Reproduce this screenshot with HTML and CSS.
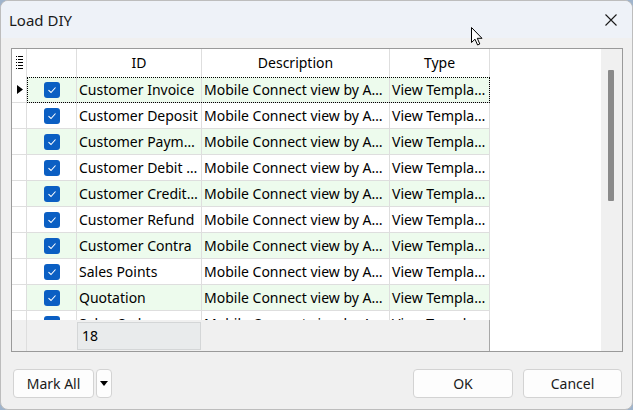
FILE: index.html
```html
<!DOCTYPE html>
<html>
<head>
<meta charset="utf-8">
<link rel="stylesheet" href="styles.css">
</head>
<body>
<div class="window">
  <div class="titlebar">
    <span class="title">Load DIY</span>
    <svg class="close" width="12" height="12" viewBox="0 0 12 12"><path d="M0.5 0.5 L11.5 11.5 M11.5 0.5 L0.5 11.5" stroke="#1a1a1a" stroke-width="1.1" fill="none"/></svg>
  </div>
  <div class="content">
    <div class="grid">
      <div class="grid-main">
        <div class="table">
          <div class="row header">
            <div class="cell ind">
              <svg width="7" height="14" viewBox="0 0 7 14">
                <rect x="0" y="0" width="1" height="1" fill="#000"/><rect x="2" y="0" width="5" height="1" fill="#000"/>
                <rect x="0" y="3" width="1" height="1" fill="#000"/><rect x="2" y="3" width="5" height="1" fill="#000"/>
                <rect x="0" y="6" width="1" height="1" fill="#000"/><rect x="2" y="6" width="5" height="1" fill="#000"/>
                <rect x="0" y="9" width="1" height="1" fill="#000"/><rect x="2" y="9" width="5" height="1" fill="#000"/>
                <rect x="0" y="12" width="1" height="1" fill="#000"/><rect x="2" y="12" width="5" height="1" fill="#000"/>
              </svg>
            </div>
            <div class="cell chk"></div>
            <div class="cell id center">ID</div>
            <div class="cell desc center">Description</div>
            <div class="cell type center">Type</div>
          </div>
          <div class="body">
            <div class="row alt">
              <div class="cell ind"><svg width="6" height="9" viewBox="0 0 6 9"><path d="M0 0 L6 4.5 L0 9 Z" fill="#000"/></svg></div>
              <div class="focus">
                <div class="cell chk"><span class="box"><svg width="10" height="8" viewBox="0 0 10 8"><path d="M1.5 4.2 L4 6.5 L8.5 1.5" stroke="#fff" stroke-width="1.1" fill="none"/></svg></span></div>
                <div class="cell id">Customer Invoice</div>
                <div class="cell desc">Mobile Connect view by Accounts</div>
                <div class="cell type">View Template</div>
              </div>
            </div>
            <div class="row">
              <div class="cell ind"></div>
              <div class="cell chk"><span class="box"><svg width="10" height="8" viewBox="0 0 10 8"><path d="M1.5 4.2 L4 6.5 L8.5 1.5" stroke="#fff" stroke-width="1.1" fill="none"/></svg></span></div>
              <div class="cell id">Customer Deposit</div>
              <div class="cell desc">Mobile Connect view by Accounts</div>
              <div class="cell type">View Template</div>
            </div>
            <div class="row alt">
              <div class="cell ind"></div>
              <div class="cell chk"><span class="box"><svg width="10" height="8" viewBox="0 0 10 8"><path d="M1.5 4.2 L4 6.5 L8.5 1.5" stroke="#fff" stroke-width="1.1" fill="none"/></svg></span></div>
              <div class="cell id">Customer Payment</div>
              <div class="cell desc">Mobile Connect view by Accounts</div>
              <div class="cell type">View Template</div>
            </div>
            <div class="row">
              <div class="cell ind"></div>
              <div class="cell chk"><span class="box"><svg width="10" height="8" viewBox="0 0 10 8"><path d="M1.5 4.2 L4 6.5 L8.5 1.5" stroke="#fff" stroke-width="1.1" fill="none"/></svg></span></div>
              <div class="cell id">Customer Debit Note</div>
              <div class="cell desc">Mobile Connect view by Accounts</div>
              <div class="cell type">View Template</div>
            </div>
            <div class="row alt">
              <div class="cell ind"></div>
              <div class="cell chk"><span class="box"><svg width="10" height="8" viewBox="0 0 10 8"><path d="M1.5 4.2 L4 6.5 L8.5 1.5" stroke="#fff" stroke-width="1.1" fill="none"/></svg></span></div>
              <div class="cell id">Customer Credit Note</div>
              <div class="cell desc">Mobile Connect view by Accounts</div>
              <div class="cell type">View Template</div>
            </div>
            <div class="row">
              <div class="cell ind"></div>
              <div class="cell chk"><span class="box"><svg width="10" height="8" viewBox="0 0 10 8"><path d="M1.5 4.2 L4 6.5 L8.5 1.5" stroke="#fff" stroke-width="1.1" fill="none"/></svg></span></div>
              <div class="cell id">Customer Refund</div>
              <div class="cell desc">Mobile Connect view by Accounts</div>
              <div class="cell type">View Template</div>
            </div>
            <div class="row alt">
              <div class="cell ind"></div>
              <div class="cell chk"><span class="box"><svg width="10" height="8" viewBox="0 0 10 8"><path d="M1.5 4.2 L4 6.5 L8.5 1.5" stroke="#fff" stroke-width="1.1" fill="none"/></svg></span></div>
              <div class="cell id">Customer Contra</div>
              <div class="cell desc">Mobile Connect view by Accounts</div>
              <div class="cell type">View Template</div>
            </div>
            <div class="row">
              <div class="cell ind"></div>
              <div class="cell chk"><span class="box"><svg width="10" height="8" viewBox="0 0 10 8"><path d="M1.5 4.2 L4 6.5 L8.5 1.5" stroke="#fff" stroke-width="1.1" fill="none"/></svg></span></div>
              <div class="cell id">Sales Points</div>
              <div class="cell desc">Mobile Connect view by Accounts</div>
              <div class="cell type">View Template</div>
            </div>
            <div class="row alt">
              <div class="cell ind"></div>
              <div class="cell chk"><span class="box"><svg width="10" height="8" viewBox="0 0 10 8"><path d="M1.5 4.2 L4 6.5 L8.5 1.5" stroke="#fff" stroke-width="1.1" fill="none"/></svg></span></div>
              <div class="cell id">Quotation</div>
              <div class="cell desc">Mobile Connect view by Accounts</div>
              <div class="cell type">View Template</div>
            </div>
            <div class="row">
              <div class="cell ind"></div>
              <div class="cell chk"><span class="box"><svg width="10" height="8" viewBox="0 0 10 8"><path d="M1.5 4.2 L4 6.5 L8.5 1.5" stroke="#fff" stroke-width="1.1" fill="none"/></svg></span></div>
              <div class="cell id">Sales Order</div>
              <div class="cell desc">Mobile Connect view by Accounts</div>
              <div class="cell type">View Template</div>
            </div>
          </div>
          <div class="footer">
            <div class="fcell find"></div>
            <div class="fcell fchk"></div>
            <div class="fcell fid"><div class="sum">18</div></div>
            <div class="fcell fdesc"></div>
            <div class="fcell ftype"></div>
          </div>
        </div>
      </div>
      <div class="vscroll"><div class="thumb"></div></div>
    </div>
    <div class="buttons">
      <button class="btn mark">Mark All</button>
      <button class="btn drop"><svg width="8" height="5" viewBox="0 0 8 5"><path d="M0 0 L8 0 L4 5 Z" fill="#000"/></svg></button>
      <div class="spacer"></div>
      <button class="btn ok">OK</button>
      <button class="btn cancel">Cancel</button>
    </div>
  </div>
  <svg class="cursor" width="13" height="19" viewBox="0 0 13 19"><path d="M0.5 0.5 L0.5 15.5 L4 12.2 L6.6 18 L8.8 17 L6.3 11.3 L11 11.3 Z" fill="#fff" stroke="#000" stroke-width="1"/></svg>
</div>
</body>
</html>
```

FILE: styles.css
```css
* { box-sizing: border-box; }
html, body { margin: 0; padding: 0; }
body {
  width: 633px;
  height: 410px;
  background: #9fb4cc;
  font-family: "Noto Sans", "Open Sans", sans-serif;
  font-size: 14px;
  color: #000;
  overflow: hidden;
}
.window {
  position: relative;
  width: 633px;
  height: 410px;
  border: 1px solid #bdbdbd;
  border-radius: 8px;
  background: #f0f0f0;
  overflow: hidden;
  display: flex;
  flex-direction: column;
}
.titlebar {
  height: 37px;
  background: #eef2f8;
  display: flex;
  align-items: center;
  padding: 0 15px 0 8px;
  flex: none;
}
.title {
  flex: 1;
  font-size: 15px;
  color: #1a1a1a;
}
.close { display: block; }
.content {
  flex: 1;
  display: flex;
  flex-direction: column;
  padding: 10px 0 0 10px;
}
.grid {
  width: 612px;
  height: 304px;
  border: 1px solid #9a9a9a;
  display: flex;
  background: #fff;
}
.grid-main {
  flex: 1;
  background: #fff;
  overflow: hidden;
}
.table {
  width: 478px;
  height: 100%;
  display: flex;
  flex-direction: column;
  font-size: 14px;
}
.row {
  display: flex;
  height: 26px;
  flex: none;
}
.row.header { height: 28px; }
.row.alt { background: #edfbed; }
.body {
  height: 243px;
  overflow: hidden;
  flex: none;
}
.focus {
  display: flex;
  outline: 1px dotted #000;
  outline-offset: -1px;
}
.cell {
  height: 100%;
  border-right: 1px solid #dedede;
  border-bottom: 1px solid #dedede;
  display: flex;
  align-items: center;
  padding: 0 2px 1px 2px;
  white-space: nowrap;
  overflow: hidden;
  text-overflow: ellipsis;
  line-height: 25px;
  flex: none;
}
.header .cell { border-bottom: none; justify-content: center; }
.cell.ind { width: 15px; background: #fff; justify-content: center; padding: 0 0 0 1px; }
.cell.chk { width: 50px; justify-content: center; padding: 0; }
.cell.id { width: 125px; display: block; }
.cell.desc { width: 188px; display: block; }
.cell.type { width: 100px; display: block; }
.header .cell.id, .header .cell.desc, .header .cell.type { display: flex; }
.box {
  width: 16px;
  height: 16px;
  border-radius: 3px;
  background: #0b5fc3;
  display: flex;
  align-items: center;
  justify-content: center;
}
.box svg { display: block; }
.footer {
  height: 31px;
  flex: none;
  display: flex;
  background: #f0f0f0;
}
.fcell { height: 100%; flex: none; }
.find { width: 15px; border-right: 1px solid #dedede; }
.fchk { width: 50px; }
.fid { width: 125px; padding-top: 2px; padding-right: 1px; }
.fdesc { width: 188px; }
.ftype { width: 100px; border-right: 1px solid #a8a8a8; }
.sum {
  height: 28px;
  background: #e9ebec;
  border: 1px solid #d4d6d7;
  padding-left: 4px;
  line-height: 26px;
}
.vscroll {
  width: 21px;
  background: #f0f0f0;
  padding: 21px 0 0 7px;
  flex: none;
}
.thumb {
  width: 6px;
  height: 131px;
  background: #8a8a8a;
  border-radius: 1px;
}
.buttons {
  display: flex;
  align-items: center;
  margin-top: 17px;
  padding: 0 10px 0 2px;
  gap: 2px;
}
.btn {
  font-family: inherit;
  font-size: 14px;
  color: #1a1a1a;
  height: 29px;
  background: #fdfdfd;
  border: 1px solid #d3d3d3;
  border-radius: 4px;
  padding: 0;
  display: flex;
  align-items: center;
  justify-content: center;
}
.mark { width: 81px; }
.drop { width: 16px; }
.spacer { flex: 1; }
.ok { width: 100px; margin-right: 8px; }
.cancel { width: 99px; }
.cursor {
  position: absolute;
  left: 470px;
  top: 26px;
}
```
